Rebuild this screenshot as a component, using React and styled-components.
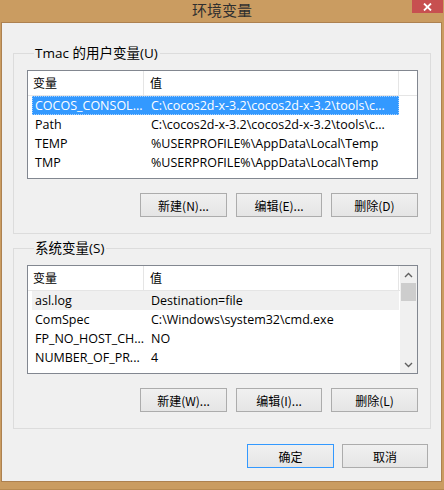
import React from "react";
import styled, { createGlobalStyle } from "styled-components";

const FONT = `"Open Sans", "Noto Sans CJK SC", sans-serif`;
const CJK = `"Noto Sans CJK SC", "Open Sans", sans-serif`;

const Global = createGlobalStyle`
  html, body { margin: 0; padding: 0; background: #ca9c61; }
  body { font-family: ${FONT}; font-size: 12px; color: #000; }
  * { box-sizing: border-box; }
`;

const Window = styled.div`
  width: 444px;
  height: 490px;
  background: #ca9c61;
  display: flex;
  flex-direction: column;
  border-bottom: 1px solid #b88b52;
`;

const TitleBar = styled.div`
  height: 22px;
  display: grid;
  grid-template-columns: 1fr auto 1fr;
  align-items: start;
`;

const Title = styled.div`
  grid-column: 2;
  font-family: ${CJK};
  font-size: 15px;
  line-height: 19px;
  color: #2f2f2f;
`;

const CloseButton = styled.div`
  grid-column: 3;
  justify-self: end;
  width: 31px;
  height: 13px;
  margin-right: 1px;
  background: #c75050;
  display: flex;
  align-items: center;
  justify-content: center;
`;

const Client = styled.div`
  flex: 1;
  margin: 0 2px 7px 1px;
  background: #f0f0f0;
  border: 1px solid #ad8150;
  display: flex;
  flex-direction: column;
`;

const Group = styled.fieldset`
  margin: ${(p) => p.$top}px 11px 0 11px;
  width: 418px;
  padding: 0 12px 16px 13px;
  border: 1px solid #dcdcdc;
  min-width: 0;
`;

const Legend = styled.legend`
  font-family: ${FONT};
  font-size: 13.5px;
  line-height: 16px;
  padding: 0 2px 0 1px;
  margin-left: 7px;
  color: #000;
`;

const List = styled.div`
  margin-top: 9px;
  height: 109px;
  border: 1px solid #828790;
  background: #fff;
  display: flex;
  overflow: hidden;
`;

const ListMain = styled.div`
  flex: 1;
  min-width: 0;
  display: flex;
  flex-direction: column;
`;

const Header = styled.div`
  height: 25px;
  display: grid;
  grid-template-columns: 116px 255px 1fr;
  border-bottom: 1px solid #e5e5e5;
  flex: none;
`;

const HeaderCell = styled.div`
  font-family: ${CJK};
  font-size: 12px;
  line-height: 24px;
  padding-left: ${(p) => p.$pad}px;
  border-right: ${(p) => (p.$last ? "none" : "1px solid #e5e5e5")};
  color: #000;
`;

const Row = styled.div`
  margin-left: 4px;
  width: 367px;
  height: 19px;
  flex: none;
  display: grid;
  grid-template-columns: 112px 255px;
  align-items: center;
  background: ${(p) => (p.$sel ? "#3399ff" : p.$dim ? "#f0f0f0" : "transparent")};
  color: ${(p) => (p.$sel ? "#fff" : "#000")};
  outline: ${(p) => (p.$sel ? "1px dotted #a8d2ff" : "none")};
  outline-offset: -1px;
`;

const Cell = styled.div`
  font-size: 12.5px;
  line-height: 19px;
  white-space: nowrap;
  overflow: hidden;
  padding-left: ${(p) => p.$pad}px;
`;

const ScrollBar = styled.div`
  width: 17px;
  flex: none;
  background: #f0f0f0;
  display: flex;
  flex-direction: column;
  align-items: center;
`;

const ScrollArrow = styled.div`
  height: 17px;
  width: 17px;
  display: flex;
  align-items: center;
  justify-content: center;
  flex: none;
`;

const ScrollThumb = styled.div`
  width: 15px;
  height: 18px;
  background: #cdcdcd;
  flex: none;
`;

const ScrollTrack = styled.div`
  flex: 1;
`;

const ButtonRow = styled.div`
  display: flex;
  justify-content: flex-end;
  gap: ${(p) => p.$gap}px;
  margin-top: ${(p) => p.$top}px;
  margin-right: ${(p) => p.$right || 0}px;
`;

const Button = styled.div`
  width: ${(p) => p.$w || 86}px;
  height: 24px;
  border: 1px solid ${(p) => (p.$default ? "#3399ff" : "#acacac")};
  background: linear-gradient(#f0f0f0, #e5e5e5);
  display: flex;
  align-items: center;
  justify-content: center;
  font-family: ${CJK};
  font-size: 12px;
  color: #000;
`;

const Chevron = ({ up }) => (
  <svg width="9" height="6" viewBox="0 0 9 6">
    <polyline
      points={up ? "1,5 4.5,1.5 8,5" : "1,1 4.5,4.5 8,1"}
      fill="none"
      stroke="#606060"
      strokeWidth="1.4"
    />
  </svg>
);

const userVars = [
  ["COCOS_CONSOL...", "C:\\cocos2d-x-3.2\\cocos2d-x-3.2\\tools\\c...", "sel"],
  ["Path", "C:\\cocos2d-x-3.2\\cocos2d-x-3.2\\tools\\c..."],
  ["TEMP", "%USERPROFILE%\\AppData\\Local\\Temp"],
  ["TMP", "%USERPROFILE%\\AppData\\Local\\Temp"],
];

const sysVars = [
  ["asl.log", "Destination=file", "dim"],
  ["ComSpec", "C:\\Windows\\system32\\cmd.exe"],
  ["FP_NO_HOST_CH...", "NO"],
  ["NUMBER_OF_PR...", "4"],
];

function VarList({ rows, scroll }) {
  return (
    <List>
      <ListMain>
        <Header>
          <HeaderCell $pad={5}>变量</HeaderCell>
          <HeaderCell $pad={6}>值</HeaderCell>
          <HeaderCell $last />
        </Header>
        {rows.map(([k, v, s]) => (
          <Row key={k} $sel={s === "sel"} $dim={s === "dim"}>
            <Cell $pad={3}>{k}</Cell>
            <Cell $pad={7}>{v}</Cell>
          </Row>
        ))}
      </ListMain>
      {scroll && (
        <ScrollBar>
          <ScrollArrow>
            <Chevron up />
          </ScrollArrow>
          <ScrollThumb />
          <ScrollTrack />
          <ScrollArrow>
            <Chevron />
          </ScrollArrow>
        </ScrollBar>
      )}
    </List>
  );
}

export default function App() {
  return (
    <>
      <Global />
      <Window>
        <TitleBar>
          <Title>环境变量</Title>
          <CloseButton>
            <svg width="9" height="8" viewBox="0 0 9 8">
              <path d="M1 0.5 L8 7.5 M8 0.5 L1 7.5" stroke="#fff" strokeWidth="1.8" />
            </svg>
          </CloseButton>
        </TitleBar>
        <Client>
          <Group $top={22}>
            <Legend>Tmac 的用户变量(U)</Legend>
            <VarList rows={userVars} />
            <ButtonRow $gap={9} $top={14}>
              <Button $w={87}>新建(N)...</Button>
              <Button>编辑(E)...</Button>
              <Button $w={87}>删除(D)</Button>
            </ButtonRow>
          </Group>
          <Group $top={6}>
            <Legend>系统变量(S)</Legend>
            <VarList rows={sysVars} scroll />
            <ButtonRow $gap={9} $top={14}>
              <Button $w={87}>新建(W)...</Button>
              <Button>编辑(I)...</Button>
              <Button $w={87}>删除(L)</Button>
            </ButtonRow>
          </Group>
          <ButtonRow $gap={8} $top={15} $right={13}>
            <Button $default $w={87}>确定</Button>
            <Button>取消</Button>
          </ButtonRow>
        </Client>
      </Window>
    </>
  );
}
